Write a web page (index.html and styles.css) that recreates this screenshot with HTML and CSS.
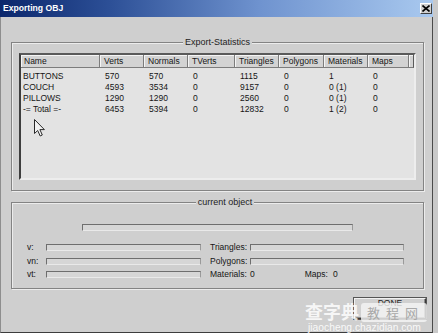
FILE: index.html
```html
<!DOCTYPE html>
<html>
<head>
<meta charset="utf-8">
<link rel="stylesheet" href="styles.css">
</head>
<body>
<div class="window">
  <div class="titlebar">
    <span class="title">Exporting OBJ</span>
    <span class="close"><svg width="8" height="7" viewBox="0 0 8 7"><path d="M0.5 0.5 L7.5 6.5 M7.5 0.5 L0.5 6.5" stroke="#000" stroke-width="1.6"/></svg></span>
  </div>
  <div class="body">
    <div class="group stats">
      <div class="group-label">Export-Statistics</div>
      <div class="listview">
        <div class="lv-row lv-header">
          <div class="hc">Name</div><div class="hc">Verts</div><div class="hc">Normals</div><div class="hc">TVerts</div><div class="hc">Triangles</div><div class="hc">Polygons</div><div class="hc">Materials</div><div class="hc">Maps</div><div class="hc fill"></div>
        </div>
        <div class="lv-body">
          <div class="lv-row"><div>BUTTONS</div><div>570</div><div>570</div><div>0</div><div>1115</div><div>0</div><div>1</div><div>0</div></div>
          <div class="lv-row"><div>COUCH</div><div>4593</div><div>3534</div><div>0</div><div>9157</div><div>0</div><div>0 (1)</div><div>0</div></div>
          <div class="lv-row"><div>PILLOWS</div><div>1290</div><div>1290</div><div>0</div><div>2560</div><div>0</div><div>0 (1)</div><div>0</div></div>
          <div class="lv-row"><div>-= Total =-</div><div>6453</div><div>5394</div><div>0</div><div>12832</div><div>0</div><div>1 (2)</div><div>0</div></div>
        </div>
        <svg class="cursor" width="12" height="18" viewBox="0 0 12 18"><path d="M0.5 0.5 L0.5 14.5 L3.7 11.5 L6.2 17 L8.3 16 L5.9 10.6 L10.4 10.6 Z" fill="#f2f2f2" stroke="#2a2a2a" stroke-width="1" stroke-linejoin="miter"/></svg>
      </div>
    </div>

    <div class="group current">
      <div class="group-label">current object</div>
      <div class="bar main-bar"></div>
      <div class="fields">
        <div class="col col-left">
          <span class="lbl">v:</span><div class="bar"></div>
          <span class="lbl">vn:</span><div class="bar"></div>
          <span class="lbl">vt:</span><div class="bar"></div>
        </div>
        <div class="col col-right">
          <span class="lbl">Triangles:</span><div class="bar"></div>
          <span class="lbl">Polygons:</span><div class="bar"></div>
          <span class="lbl">Materials:</span>
          <div class="counts"><span class="val">0</span><span class="lbl maps">Maps:</span><span class="val">0</span></div>
        </div>
      </div>
    </div>

    <div class="actions">
      <button class="done">DONE</button>
    </div>
  </div>
  <div class="watermark">
    <span class="wm-big">查字典</span>
    <span class="wm-box">教程网</span>
    <span class="wm-url">jiaocheng.chazidian.com</span>
  </div>
</div>
</body>
</html>
```
FILE: styles.css
```css
* { box-sizing: border-box; }
html, body { margin: 0; padding: 0; }
body {
  background: #c9c9c9;
  font-family: "Liberation Sans", Arial, sans-serif;
  font-size: 8.5px;
  color: #151515;
  width: 438px;
  height: 333px;
  overflow: hidden;
}
.window {
  position: relative;
  width: 433px;
  height: 333px;
  display: flex;
  flex-direction: column;
}
.titlebar {
  height: 17px;
  flex: none;
  display: flex;
  align-items: center;
  justify-content: space-between;
  padding: 0 1px 0 3px;
  background: linear-gradient(to right, #0b276c 0%, #2c4f96 25%, #6f93cf 60%, #a9c9ef 100%);
}
.title {
  color: #fff;
  font-weight: bold;
  font-size: 8.6px;
  line-height: 17px;
}
.close {
  width: 12px;
  height: 11px;
  background: #d0d0d0;
  border: 1px solid;
  border-color: #fff #404040 #404040 #fff;
  display: flex;
  align-items: center;
  justify-content: center;
}
.close svg { display: block; }
.body {
  flex: 1;
  background: #cfcfcf;
  border-left: 1px solid #8e8e8e;
  border-right: 1px solid #4a4a4a;
  border-bottom: 1px solid #3c3c3c;
  padding: 25px 8px 0 10px;
  display: flex;
  flex-direction: column;
}
.group {
  width: 413px;
  border: 1px solid #838383;
  box-shadow: inset 1px 1px 0 #ececec, 1px 1px 0 #ececec;
}
.group-label {
  width: max-content;
  margin: -6px auto 0;
  padding: 0 2px;
  background: #cfcfcf;
  font-size: 9px;
  line-height: 11px;
  color: #222;
}
.stats {
  padding: 0 7px 10px 7px;
}
.listview {
  position: relative;
  margin-top: 5px;
  height: 127px;
  background: #e3e3e3;
  border: 2px solid;
  border-color: #5a5a5a #ededed #ededed #3e3e3e;
}
.lv-row {
  display: grid;
  grid-template-columns: 79px 44px 44px 47px 44px 45px 44px 41px 1fr;
}
.lv-header {
  height: 13px;
}
.hc {
  background: #d3d3d3;
  border-right: 1px solid #7c7c7c;
  border-bottom: 1px solid #7c7c7c;
  box-shadow: inset 1px 1px 0 #f5f5f5;
  padding-left: 4px;
  line-height: 12px;
  white-space: nowrap;
  overflow: hidden;
}
.hc:first-child { padding-left: 3px; }
.hc.fill { border-right-color: #5a5a5a; }
.lv-body { padding-top: 3px; }
.lv-body .lv-row > div {
  line-height: 11px;
  padding-left: 5px;
  white-space: nowrap;
}
.lv-body .lv-row > div:first-child { padding-left: 2px; }
.cursor {
  position: absolute;
  left: 13px;
  top: 64px;
}
.current {
  margin-top: 11px;
  padding: 0 0 6px 15px;
}
.bar {
  height: 7px;
  background: #d6d6d6;
  border-top: 1px solid #6e6e6e;
  border-left: 1px solid #6e6e6e;
  border-bottom: 1px solid #e9e9e9;
  border-right: 1px solid #9a9a9a;
}
.main-bar {
  width: 271px;
  margin: 16px 0 0 55px;
}
.fields {
  display: flex;
  gap: 9px;
  margin-top: 10px;
}
.col {
  display: grid;
  grid-auto-rows: 13.5px;
  align-items: center;
}
.col-left { grid-template-columns: 19px 155px; }
.col-right { grid-template-columns: 40px 154px; }
.lbl { line-height: 11px; white-space: nowrap; }
.counts {
  display: flex;
  align-items: center;
  line-height: 11px;
}
.counts .maps { margin-left: 50px; }
.counts .val + .maps + .val { margin-left: 5px; }
.actions {
  display: flex;
  justify-content: flex-end;
  margin: 9px -2px 0 0;
}
.done {
  width: 72px;
  height: 21px;
  padding: 0 0 10px;
  background: #d0d0d0;
  border: 1px solid;
  border-color: #f2f2f2 #3a3a3a #3a3a3a #f2f2f2;
  box-shadow: inset -1px -1px 0 #8a8a8a, 0 0 0 1px #555;
  font-family: "Liberation Sans", Arial, sans-serif;
  font-size: 8.5px;
  line-height: 9px;
  color: #222;
}
.watermark {
  position: absolute;
  left: 305px;
  top: 300px;
  width: 126px;
  height: 33px;
}
.wm-big {
  position: absolute;
  left: 0;
  top: 0;
  font-family: "Noto Sans CJK SC", sans-serif;
  font-weight: bold;
  font-size: 18px;
  line-height: 23px;
  color: rgba(255,255,255,0.82);
  white-space: nowrap;
}
.wm-box {
  position: absolute;
  left: 56px;
  top: 3px;
  width: 66px;
  height: 19px;
  border-radius: 3px;
  background: rgba(245,245,245,0.8);
  font-family: "Noto Sans CJK SC", sans-serif;
  font-size: 13px;
  line-height: 19px;
  letter-spacing: 6px;
  padding-left: 6px;
  color: #a8a8a8;
  white-space: nowrap;
}
.wm-url {
  position: absolute;
  left: 3px;
  top: 22px;
  font-family: "Liberation Sans", Arial, sans-serif;
  font-size: 10.3px;
  line-height: 11px;
  color: rgba(255,255,255,0.88);
  white-space: nowrap;
}
```
